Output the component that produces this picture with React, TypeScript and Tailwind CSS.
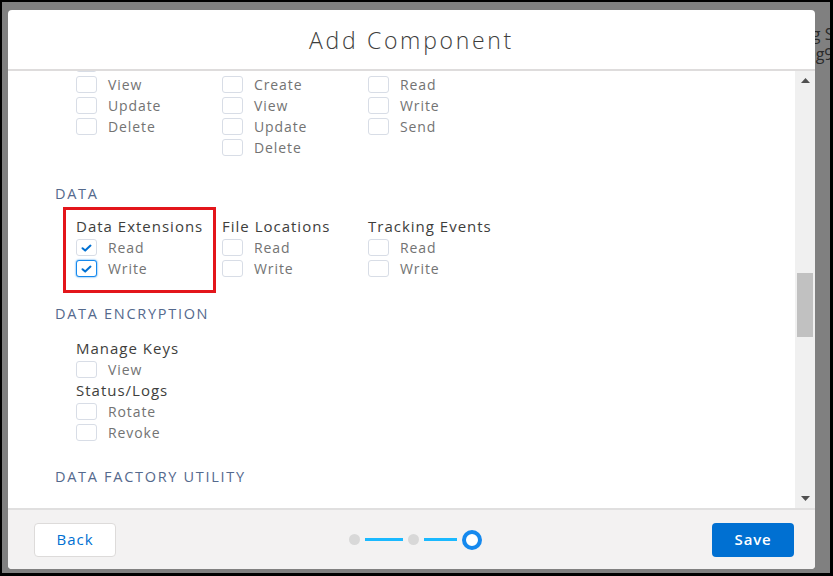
import React from 'react'

type Item = { label: string; checked?: boolean; focus?: boolean; group?: boolean; hidden?: boolean }

const Checkbox: React.FC<{ checked?: boolean; focus?: boolean }> = ({ checked, focus }) => (
  <span
    className={
      'flex items-center justify-center w-[21px] h-[17px] rounded-[3px] bg-white border ' +
      (focus ? 'border-[#1589ee] shadow-[0_0_2px_#1589ee]' : 'border-[#d8dde6]')
    }
  >
    {checked && (
      <svg width="11" height="8" viewBox="0 0 11 8">
        <path d="M1.5 4.2 L4.2 6.6 L9.5 1.6" fill="none" stroke="#0070d2" strokeWidth="2" strokeLinecap="round" strokeLinejoin="round" />
      </svg>
    )}
  </span>
)

const Row: React.FC<{ item: Item }> = ({ item }) => {
  if (item.group) {
    return (
      <div className="h-[21px] flex items-center text-[15px] text-[#3e3e3c] tracking-[1px] whitespace-nowrap">
        {item.label}
      </div>
    )
  }
  if (item.hidden) return <div className="h-[21px]" />
  return (
    <div className="h-[21px] flex items-center">
      <Checkbox checked={item.checked} focus={item.focus} />
      {item.label && (
        <span className="ml-[11px] text-[14px] text-[#737373] tracking-[0.9px] whitespace-nowrap">{item.label}</span>
      )}
    </div>
  )
}

const Column: React.FC<{ items: Item[]; boxed?: boolean }> = ({ items, boxed }) => (
  <div className="relative w-[146px] flex flex-col">
    {boxed && <div className="absolute -left-[13px] -top-[9px] w-[153px] h-[86px] border-[3px] border-[#e3161b]" />}
    {items.map((it, i) => (
      <Row key={i} item={it} />
    ))}
  </div>
)

const Heading: React.FC<{ children: React.ReactNode }> = ({ children }) => (
  <div className="h-[20px] flex items-center text-[14.5px] text-[#54698d] tracking-[1.7px] whitespace-nowrap">{children}</div>
)

export default function App() {
  return (
    <div className="relative w-[833px] h-[576px] overflow-hidden bg-[#808080] border-l-2 border-t-2 border-r-[3px] border-b-[3px] border-black pl-[6px] pt-[8px] pr-[15px] pb-[4px] font-['Open_Sans',sans-serif]">
      {/* page behind the modal */}
      <div className="absolute left-[800px] top-[22px] text-[16px] leading-[20px] text-[#2b2b2b] whitespace-nowrap">
        <div>ng S</div>
        <div>iog9</div>
      </div>

      <div className="relative h-full flex flex-col bg-white rounded-[4px] overflow-hidden">
        {/* header */}
        <div className="h-[61px] shrink-0 flex items-center justify-center border-b-2 border-[#dedcdc]">
          <h1 className="text-[23px] font-light text-[#3e3e3c] tracking-[2.7px] pt-[1px]">Add Component</h1>
        </div>

        {/* body */}
        <div className="flex-1 flex min-h-0">
          <div className="flex-1 overflow-hidden pl-[47px]">
            <div className="-mt-[18px] flex flex-col">
              <div className="flex pl-[21px]">
                <Column items={[{ label: '' }, { label: 'View' }, { label: 'Update' }, { label: 'Delete' }]} />
                <Column items={[{ label: '', hidden: true }, { label: 'Create' }, { label: 'View' }, { label: 'Update' }, { label: 'Delete' }]} />
                <Column items={[{ label: '', hidden: true }, { label: 'Read' }, { label: 'Write' }, { label: 'Send' }]} />
              </div>

              <div className="mt-[26px]">
                <Heading>DATA</Heading>
                <div className="mt-[12px] flex pl-[21px]">
                  <Column
                    boxed
                    items={[
                      { label: 'Data Extensions', group: true },
                      { label: 'Read', checked: true },
                      { label: 'Write', checked: true, focus: true },
                    ]}
                  />
                  <Column items={[{ label: 'File Locations', group: true }, { label: 'Read' }, { label: 'Write' }]} />
                  <Column items={[{ label: 'Tracking Events', group: true }, { label: 'Read' }, { label: 'Write' }]} />
                </div>
              </div>

              <div className="mt-[25px]">
                <Heading>DATA ENCRYPTION</Heading>
                <div className="mt-[14px] flex pl-[21px]">
                  <Column
                    items={[
                      { label: 'Manage Keys', group: true },
                      { label: 'View' },
                      { label: 'Status/Logs', group: true },
                      { label: 'Rotate' },
                      { label: 'Revoke' },
                    ]}
                  />
                </div>
              </div>

              <div className="mt-[24px]">
                <Heading>DATA FACTORY UTILITY</Heading>
              </div>
            </div>
          </div>

          {/* scrollbar */}
          <div className="w-[20px] shrink-0 bg-[#f0f0f0] flex flex-col items-center justify-between py-[7px]">
            <svg width="9" height="5" viewBox="0 0 9 5"><path d="M0 5 L4.5 0 L9 5 Z" fill="#505050" /></svg>
            <div className="flex-1 w-full flex flex-col pt-[190px]">
              <div className="mx-auto w-[16px] h-[64px] bg-[#c1c1c1]" />
            </div>
            <svg width="9" height="5" viewBox="0 0 9 5"><path d="M0 0 L9 0 L4.5 5 Z" fill="#505050" /></svg>
          </div>
        </div>

        {/* footer */}
        <div className="h-[61px] shrink-0 bg-[#f3f2f2] border-t-2 border-[#e0dfdf] flex items-center justify-between pl-[26px] pr-[21px]">
          <button className="w-[82px] h-[34px] bg-white border border-[#dddbda] rounded-[4px] text-[15px] text-[#0070d2] tracking-[1px]">
            Back
          </button>
          <div className="flex items-center ml-[2px]">
            <span className="w-[11px] h-[11px] rounded-full bg-[#d8d8d8]" />
            <span className="w-[38px] h-[3px] bg-[#1ab9ff] mx-[5px]" />
            <span className="w-[11px] h-[11px] rounded-full bg-[#d8d8d8]" />
            <span className="w-[33px] h-[3px] bg-[#1ab9ff] mx-[5px]" />
            <span className="w-[20px] h-[20px] rounded-full border-[4px] border-[#1589ee] bg-white" />
          </div>
          <button className="w-[82px] h-[34px] bg-[#0070d2] rounded-[4px] text-[15px] font-semibold text-white tracking-[0.8px]">
            Save
          </button>
        </div>
      </div>
    </div>
  )
}
